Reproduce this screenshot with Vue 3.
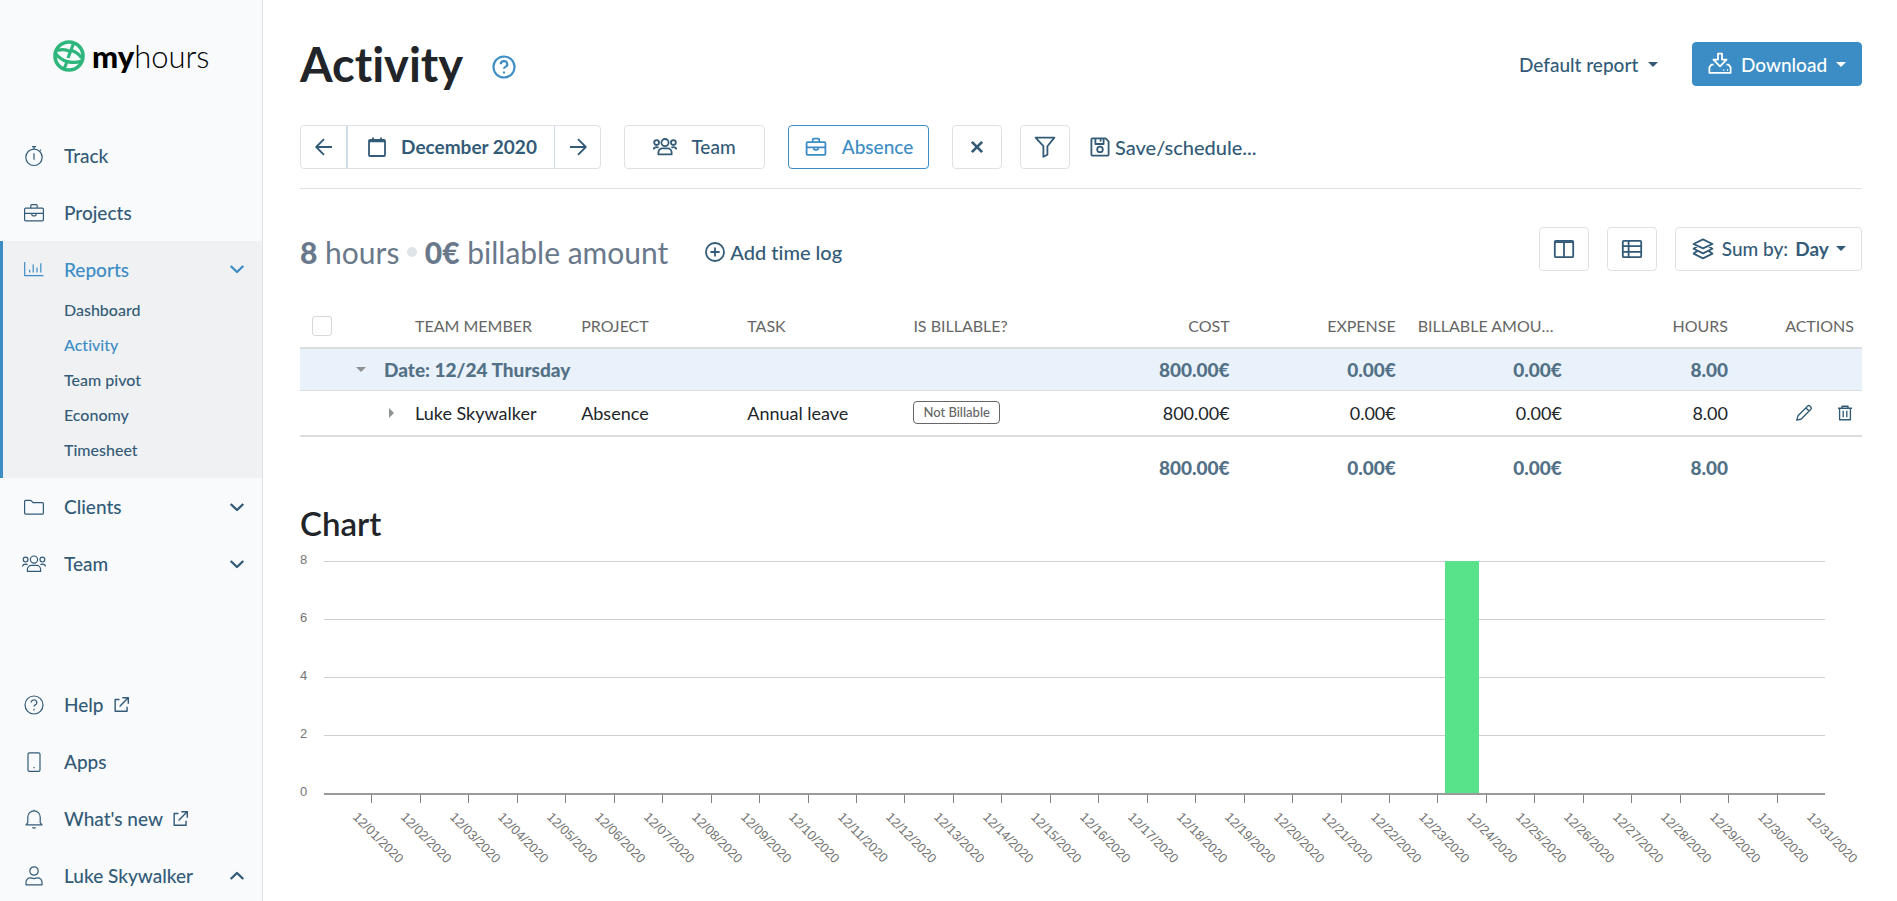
<template>
  <div class="app">
    <aside class="sidebar">
      <a href="#" class="logo">
        <svg class="logo-mark" viewBox="0 0 32 32" fill="none" stroke="#2eb67d">
          <circle cx="16" cy="16" r="14" stroke-width="3.6"/>
          <path d="M4 10.5c5-1.5 9.500-1 13 .8M3 14c6 7.500 16 10.500 26 7M20.500 3.500 15 18M18.500 10.500c5 1.500 8 4 10 7.500M13.500 23 11 29" stroke-width="3.2"/>
        </svg>
        <span class="logo-text"><b>my</b>hours</span>
      </a>

      <nav class="nav">
        <template v-for="item in mainNav" :key="item.label">
          <div class="nav-group" :class="{ active: item.children }">
            <a href="#" class="nav-item">
              <Icon :name="item.icon" class="thin"/>
              <span>{{ item.label }}</span>
              <Icon v-if="item.chevron" name="chevronDown" class="chevron"/>
            </a>
            <a
              v-for="child in item.children"
              :key="child"
              href="#"
              class="sub-item"
              :class="{ current: child === 'Activity' }"
            >{{ child }}</a>
          </div>
        </template>
      </nav>

      <nav class="nav nav-bottom">
        <a v-for="item in bottomNav" :key="item.label" href="#" class="nav-item">
          <Icon :name="item.icon" class="thin"/>
          <span>{{ item.label }}</span>
          <Icon v-if="item.external" name="external" class="external"/>
          <Icon v-if="item.chevron" name="chevronUp" class="chevron"/>
        </a>
      </nav>
    </aside>

    <main class="main">
      <header class="page-header">
        <h1>Activity</h1>
        <a href="#" class="help" aria-label="Help"><Icon name="help"/></a>
        <label class="report-select">
          <select aria-label="Report">
            <option>Default report</option>
          </select>
          <i class="caret"></i>
        </label>
        <button class="btn primary">
          <Icon name="download"/>
          <span>Download</span>
          <i class="caret"></i>
        </button>
      </header>

      <!-- Filters -->
      <div class="filters">
        <div class="date-group">
          <button class="step" aria-label="Previous"><Icon name="arrowLeft"/></button>
          <button class="period"><Icon name="calendar"/><span>December 2020</span></button>
          <button class="step" aria-label="Next"><Icon name="arrowRight"/></button>
        </div>
        <button class="btn filter"><Icon name="team"/><span>Team</span></button>
        <button class="btn filter selected"><Icon name="briefcase"/><span>Absence</span></button>
        <div class="filter-tools">
          <button class="btn square" aria-label="Clear"><Icon name="close" class="heavy"/></button>
          <button class="btn square" aria-label="Filter"><Icon name="funnel"/></button>
          <button class="link-btn"><Icon name="save"/><span>Save/schedule...</span></button>
        </div>
      </div>

      <!-- Totals -->
      <div class="summary">
        <p class="totals"><b>8</b> hours <i class="dot"></i> <b>0€</b> billable amount</p>
        <button class="link-btn add"><Icon name="plus"/><span>Add time log</span></button>
        <div class="view-tools">
          <button class="btn square" aria-label="Columns"><Icon name="columns"/></button>
          <button class="btn square" aria-label="Rows"><Icon name="table"/></button>
          <label class="btn sum-by">
            <Icon name="layers"/>
            <span>Sum by:</span>
            <select>
              <option>Day</option>
            </select>
            <i class="caret"></i>
          </label>
        </div>
      </div>

      <table class="logs">
        <colgroup>
          <col class="col-check">
          <col class="col-toggle">
          <col class="col-toggle">
          <col span="8">
          <col class="col-actions">
        </colgroup>
        <thead>
          <tr>
            <th class="check"><input type="checkbox" aria-label="Select all"></th>
            <th></th>
            <th></th>
            <th>Team member</th>
            <th>Project</th>
            <th>Task</th>
            <th>Is billable?</th>
            <th class="num">Cost</th>
            <th class="num">Expense</th>
            <th class="num">Billable amount</th>
            <th class="num">Hours</th>
            <th class="num">Actions</th>
          </tr>
        </thead>
        <tbody>
          <tr class="group">
            <td></td>
            <td class="toggle"><button class="arrow down" aria-label="Collapse"></button></td>
            <td colspan="5">Date: 12/24 Thursday</td>
            <td v-for="(t, i) in totals" :key="i" class="num">{{ t }}</td>
            <td></td>
          </tr>
          <tr v-for="log in logs" :key="log.member" class="log">
            <td></td>
            <td></td>
            <td class="toggle"><button class="arrow right" aria-label="Expand"></button></td>
            <td>{{ log.member }}</td>
            <td>{{ log.project }}</td>
            <td>{{ log.task }}</td>
            <td><span class="badge">Not Billable</span></td>
            <td v-for="(v, i) in log.values" :key="i" class="num">{{ v }}</td>
            <td class="actions">
              <div>
                <button aria-label="Edit"><Icon name="pencil"/></button>
                <button aria-label="Delete"><Icon name="trash"/></button>
              </div>
            </td>
          </tr>
        </tbody>
        <tfoot>
          <tr>
            <td colspan="7"></td>
            <td v-for="(t, i) in totals" :key="i" class="num">{{ t }}</td>
            <td></td>
          </tr>
        </tfoot>
      </table>

      <h2>Chart</h2>
      <div class="chart">
        <div class="y-axis">
          <span v-for="n in [8, 6, 4, 2, 0]" :key="n">{{ n }}</span>
        </div>
        <div class="plot">
          <div class="bands">
            <div v-for="n in 4" :key="n" class="band"></div>
            <div class="bars">
              <div v-for="d in days" :key="d.label" class="slot">
                <div v-if="d.hours" class="bar" :style="{ height: (d.hours / 8) * 100 + '%' }"></div>
              </div>
            </div>
          </div>
          <div class="x-axis">
            <div v-for="d in days" :key="d.label" class="tick"><span>{{ d.label }}</span></div>
          </div>
        </div>
      </div>
    </main>
  </div>
</template>

<script setup>
import { h } from "vue";

// 24x24 stroke icons
const icons = {
  stopwatch: '<circle cx="12" cy="13.3" r="8.2"/><path d="M12 5V3M10 2.6h4M12 9.3v6.4M18 6.6l1-1"/>',
  briefcase: '<rect x="2.6" y="7.2" width="18.8" height="12.6" rx="1"/><path d="M8.8 7V4.6a1 1 0 0 1 1-1h4.4a1 1 0 0 1 1 1V7M2.6 12.4h18.8M9.8 12.6v1a1.2 1.2 0 0 0 1.2 1.2h2a1.2 1.2 0 0 0 1.2-1.2v-1"/>',
  chart: '<path d="M2.7 5v13.6h18.8M7.6 15.6v-2.8M11.2 15.6V7.6M15 15.6v-5M18.8 15.6V6.2"/>',
  folder: '<path d="M2.6 18.2V6.4a1 1 0 0 1 1-1h5.2l2.4 2.3h9.2a1 1 0 0 1 1 1v9.5a1 1 0 0 1-1 1H3.6a1 1 0 0 1-1-1z"/>',
  team: '<circle cx="12" cy="7.6" r="3.6"/><path d="M5.4 19.4v-2a4 4 0 0 1 4-4h5.2a4 4 0 0 1 4 4v2z"/><circle cx="3.6" cy="7.6" r="2.4"/><circle cx="20.4" cy="7.6" r="2.4"/><path d="M.6 14.6c0-1.6 1.2-2.5 3-2.5.8 0 1.5.2 2 .6M23.4 14.6c0-1.6-1.2-2.5-3-2.5-.8 0-1.5.2-2 .6"/>',
  help: '<circle cx="12" cy="12" r="9"/><path d="M9.2 9.6a2.8 2.6 0 1 1 4 2.3c-.8.4-1.2.9-1.2 1.7M12 15.8v1.8"/>',
  phone: '<rect x="6" y="2.8" width="12" height="18.6" rx="1.4"/><path d="M11.4 17.6h1.2"/>',
  bell: '<path d="M12 4V2.8M5.8 15.6V10a6.2 6.2 0 0 1 12.4 0v5.6l1.8 2.2H4zM10.4 20.4c.8.9 2.4.9 3.2 0"/>',
  user: '<circle cx="12" cy="7" r="4.2"/><path d="M4 20.8v-2.6a4.4 4.4 0 0 1 4.4-4.4c1.2 0 2 .8 3.6.8s2.4-.8 3.6-.8a4.4 4.4 0 0 1 4.4 4.4v2.6z"/>',
  external: '<path d="M9.5 5.6H4v15h15v-5.8M13 3.4h7.6V11M20.4 3.6 9.6 14.6"/>',
  chevronDown: '<path d="m6.6 9.4 5.4 5.2 5.4-5.2"/>',
  chevronUp: '<path d="m6.6 14.6 5.4-5.2 5.4 5.2"/>',
  download: '<path d="M10 1.6h4v6h4.6L12 14.4 5.4 7.6H10zM5.6 12.6H3.4l-2 2.6v5.6h21.2v-5.6l-2-2.6h-2.200M15.400 18h.8M19 18h.8"/>',
  arrowLeft: '<path d="M20 12H4.4M12 4.2 4.2 12l7.8 7.8"/>',
  arrowRight: '<path d="M4 12h15.6M12 4.2l7.8 7.8-7.8 7.8"/>',
  calendar: '<rect x="4" y="5" width="16" height="16" rx="1"/><path d="M4 6.4h16M8 2.4v4M16 2.4v4"/>',
  close: '<path d="m6.4 6.4 11.2 11.2M17.6 6.4 6.4 17.6"/>',
  funnel: '<path d="M2.6 2.6h18.8l-7 8.6v8.6l-4 2V11.2z"/>',
  save: '<path d="M3.4 4.4a1 1 0 0 1 1-1h13.2l3 3v13.2a1 1 0 0 1-1 1H4.4a1 1 0 0 1-1-1zM7.4 3.6V9h8.2V3.6M12.6 4v2.6"/><circle cx="12" cy="14.4" r="2.8"/>',
  plus: '<circle cx="12" cy="12" r="9"/><path d="M12 7.4v9.2M7.4 12h9.2"/>',
  columns: '<rect x="2.8" y="3.8" width="18.4" height="16.4" rx="1"/><path d="M3 5.2h18M12 5v15"/>',
  table: '<rect x="2.8" y="3.8" width="18.4" height="16.4" rx="1"/><path d="M3 9.2h18M3 14.8h18M8.6 4v16"/>',
  layers: '<path d="m2.6 7 9.4-4.6L21.4 7 12 11.4zM6 9.4l-3.4 2.4 9.4 4.6 9.4-4.6L18 9.4M6 14.2l-3.4 2.4 9.4 4.8 9.4-4.8-3.4-2.4"/>',
  pencil: '<path d="M2.4 21.6 4 15.6 17 2.8a2 2 0 0 1 2.8 0l1.4 1.4a2 2 0 0 1 0 2.800L8.400 20zM14.600 5.200l4.200 4.200"/>',
  trash: '<path d="M2.6 5.6h18.8M4.8 6v15h14.4V6M8 5.2V3h8v2.2M9.6 9v8.8M14.4 9v8.8"/>'
};

const Icon = (props) =>
  h("svg", { class: "icon", viewBox: "0 0 24 24", innerHTML: icons[props.name] });
Icon.props = ["name"];

const mainNav = [
  { label: "Track", icon: "stopwatch" },
  { label: "Projects", icon: "briefcase" },
  {
    label: "Reports",
    icon: "chart",
    chevron: true,
    children: ["Dashboard", "Activity", "Team pivot", "Economy", "Timesheet"]
  },
  { label: "Clients", icon: "folder", chevron: true },
  { label: "Team", icon: "team", chevron: true }
];

const bottomNav = [
  { label: "Help", icon: "help", external: true },
  { label: "Apps", icon: "phone" },
  { label: "What's new", icon: "bell", external: true },
  { label: "Luke Skywalker", icon: "user", chevron: true }
];

const totals = ["800.00€", "0.00€", "0.00€", "8.00"];

const logs = [
  { member: "Luke Skywalker", project: "Absence", task: "Annual leave", values: totals }
];

const days = Array.from({ length: 31 }, (_, i) => ({
  label: `12/${String(i + 1).padStart(2, "0")}/2020`,
  hours: i === 23 ? 8 : 0
}));
</script>

<style>
body {
  margin: 0;
  background: #fff;
}
</style>

<style scoped>
* {
  box-sizing: border-box;
}
.app {
  display: flex;
  min-height: 100vh;
  font-family: Lato, "Open Sans", sans-serif;
  font-size: 19px;
  font-weight: 500;
  font-variant-ligatures: none;
  color: #335b77;
}
a {
  color: inherit;
  text-decoration: none;
}
button,
select {
  font: inherit;
  color: inherit;
  background: none;
  border: none;
  padding: 0;
  cursor: pointer;
}
select {
  appearance: none;
}
.icon {
  width: 24px;
  height: 24px;
  flex: none;
  fill: none;
  stroke: currentColor;
  stroke-width: 1.8;
  stroke-linejoin: round;
}
.icon.thin {
  stroke-width: 1.2;
}
.icon.heavy {
  width: 22px;
  height: 22px;
  stroke-width: 3;
}
.caret {
  border: 5px solid transparent;
  border-top-color: currentColor;
  border-bottom: none;
}

/* Sidebar */
.sidebar {
  width: 263px;
  height: 100vh;
  flex: none;
  display: flex;
  flex-direction: column;
  overflow: hidden;
  background: #f8fafc;
  border-right: 1px solid #dfe3e8;
}
.logo {
  display: flex;
  align-items: center;
  gap: 7px;
  height: 127px;
  padding: 0 0 15px 53px;
  flex: none;
  color: #000;
}
.logo-mark {
  width: 32px;
  height: 32px;
}
.logo-text {
  font-size: 31px;
  font-weight: 300;
  line-height: 32px;
}
.logo-text b {
  font-weight: 900;
}
.nav {
  flex: none;
}
.nav-bottom {
  margin-top: 84px;
}
.nav-item {
  display: flex;
  align-items: center;
  height: 57px;
  padding: 0 11px 0 22px;
}
.nav-item .thin {
  margin-right: 18px;
}
.nav-item .chevron {
  width: 28px;
  height: 28px;
  margin-left: auto;
  stroke-width: 2;
}
.nav-item .external {
  width: 19px;
  height: 19px;
  margin-left: 8px;
}
.nav-group.active {
  background: #eff1f3;
  border-left: 3px solid #3c8dc5;
  padding-bottom: 11px;
}
.active .nav-item {
  height: 51px;
  padding-top: 5px;
  padding-left: 19px;
  color: #3c8dc5;
}
.sub-item {
  display: block;
  padding-left: 61px;
  font-size: 16px;
  line-height: 35px;
}
.sub-item.current {
  color: #3c8dc5;
}

/* Header */
.main {
  flex: 1;
  min-width: 0;
  padding: 32px 35px 0 37px;
}
.page-header {
  display: flex;
  align-items: center;
  height: 64px;
}
h1 {
  margin: 0;
  font-size: 47px;
  font-weight: 700;
  line-height: 64px;
  color: #212529;
}
.help {
  display: flex;
  margin-left: 27px;
  padding-top: 6px;
  color: #3c8dc5;
}
.help .icon {
  width: 28px;
  height: 28px;
}
.report-select {
  display: flex;
  align-items: center;
  gap: 9px;
  margin: 0 34px 0 auto;
}
.btn {
  display: flex;
  align-items: center;
  justify-content: center;
  height: 44px;
  border: 1px solid #dee2e6;
  border-radius: 4px;
}
.btn.primary {
  width: 170px;
  gap: 9px;
  background: #3c8dc5;
  border-color: #3c8dc5;
  color: #fff;
}

.filters {
  display: flex;
  align-items: center;
  gap: 23px;
  height: 93px;
  padding-top: 9px;
  border-bottom: 1px solid #dee2e6;
}
.date-group {
  display: flex;
  height: 44px;
  border: 1px solid #dee2e6;
  border-radius: 4px;
}
.date-group button {
  display: flex;
  align-items: center;
  justify-content: center;
}
.step {
  width: 45px;
}
.date-group .period {
  width: 209px;
  gap: 12px;
  border-left: 2px solid #cfdde9;
  border-right: 1px solid #cfdde9;
  font-weight: 700;
}
.filter {
  width: 141px;
  gap: 14px;
}
.filter.selected {
  border-color: #3c8dc5;
  color: #3c8dc5;
}
.filter-tools {
  display: flex;
  gap: 18px;
}
.square {
  width: 50px;
}
.link-btn {
  display: flex;
  align-items: center;
  gap: 3px;
  font-size: 20px;
}

.summary {
  display: flex;
  align-items: center;
  height: 119px;
}
.totals {
  margin: 0;
  padding-top: 7px;
  font-size: 30px;
  font-weight: 400;
  color: #69788a;
}
.totals b {
  font-weight: 900;
}
.dot {
  display: inline-block;
  width: 10px;
  height: 10px;
  border-radius: 50%;
  background: #dfe3ea;
  vertical-align: 7px;
}
.add {
  margin-left: 35px;
  padding-top: 7px;
}
.view-tools {
  display: flex;
  gap: 18px;
  margin-left: auto;
}
.sum-by {
  width: 187px;
  gap: 7px;
}
.sum-by select {
  font-weight: 700;
}

/* Table */
.logs {
  width: 100%;
  table-layout: fixed;
  border-collapse: collapse;
  font-size: 18px;
  color: #212529;
}
.col-check {
  width: 45px;
}
.col-toggle {
  width: 31px;
}
.col-actions {
  width: 126px;
}
.logs th,
.logs td {
  padding: 0 8px;
  text-align: left;
  white-space: nowrap;
}
.logs th {
  height: 40px;
  padding-bottom: 4px;
  overflow: hidden;
  text-overflow: ellipsis;
  font-size: 16px;
  font-weight: 400;
  text-transform: uppercase;
  color: #666;
}
.logs th.num {
  padding-left: 14px;
}
.logs .num {
  text-align: right;
}
.logs thead tr {
  border-bottom: 2px solid #dcdddd;
}
.logs .check {
  padding: 0 0 4px 12px;
}
.check input {
  display: block;
  appearance: none;
  width: 20px;
  height: 20px;
  margin: 0;
  border: 1px solid #d5d8da;
  border-radius: 3px;
}
.logs .group {
  background: #e9f2fa;
  border-bottom: 1px solid #dcdddd;
}
.logs .group td {
  height: 42px;
}
.logs .group td,
.logs tfoot td {
  font-size: 19px;
  font-weight: 900;
  color: #527086;
}
.logs .log {
  border-bottom: 2px solid #dcdddd;
}
.logs .log td {
  height: 46px;
  font-weight: 400;
}
.logs tfoot td {
  height: 61px;
}
.logs .toggle {
  padding: 0;
  text-align: center;
}
.arrow {
  display: block;
  margin: 0 auto;
  border: 5px solid transparent;
}
.arrow.down {
  border-top-color: #8f9394;
  border-bottom: none;
}
.arrow.right {
  border-left-color: #8f9394;
  border-right: none;
}
.badge {
  display: block;
  width: max-content;
  padding: 0 9px;
  border: 1px solid #666;
  border-radius: 4px;
  font-size: 13px;
  font-weight: 500;
  line-height: 21px;
  color: #666;
}
.actions div {
  display: flex;
  justify-content: flex-end;
  gap: 23px;
  color: #335b77;
}
.actions button {
  display: flex;
}
.actions .icon {
  width: 18px;
  height: 18px;
}

/* Chart */
h2 {
  margin: 6px 0 18px;
  font-size: 33px;
  font-weight: 600;
  line-height: 40px;
  color: #212529;
}
.chart {
  display: flex;
  padding-right: 37px;
  font-family: "Liberation Sans", Arial, sans-serif;
  font-size: 13px;
  font-weight: 400;
  color: #757575;
}
.y-axis {
  display: flex;
  flex: none;
  flex-direction: column;
  gap: 46px;
  width: 24px;
  margin-top: -7px;
  line-height: 12px;
}
.plot {
  flex: 1;
  min-width: 0;
}
.bands {
  position: relative;
  border-bottom: 2px solid #999;
}
.band {
  height: 58px;
  border-top: 1px solid #d0d0d0;
}
.bars {
  position: absolute;
  inset: 0;
  display: flex;
}
.slot {
  flex: 1;
  display: flex;
  align-items: flex-end;
  justify-content: center;
}
.bar {
  width: 70%;
  background: #58e38b;
}
.x-axis {
  display: flex;
}
.tick {
  flex: 1;
  min-width: 0;
  height: 8px;
  border-right: 1px solid #808080;
}
.tick:last-child {
  border-right: none;
}
.tick span {
  display: block;
  width: max-content;
  margin: 13px 0 0 31px;
  line-height: 14px;
  transform: rotate(45deg);
  transform-origin: 0 50%;
}
</style>
